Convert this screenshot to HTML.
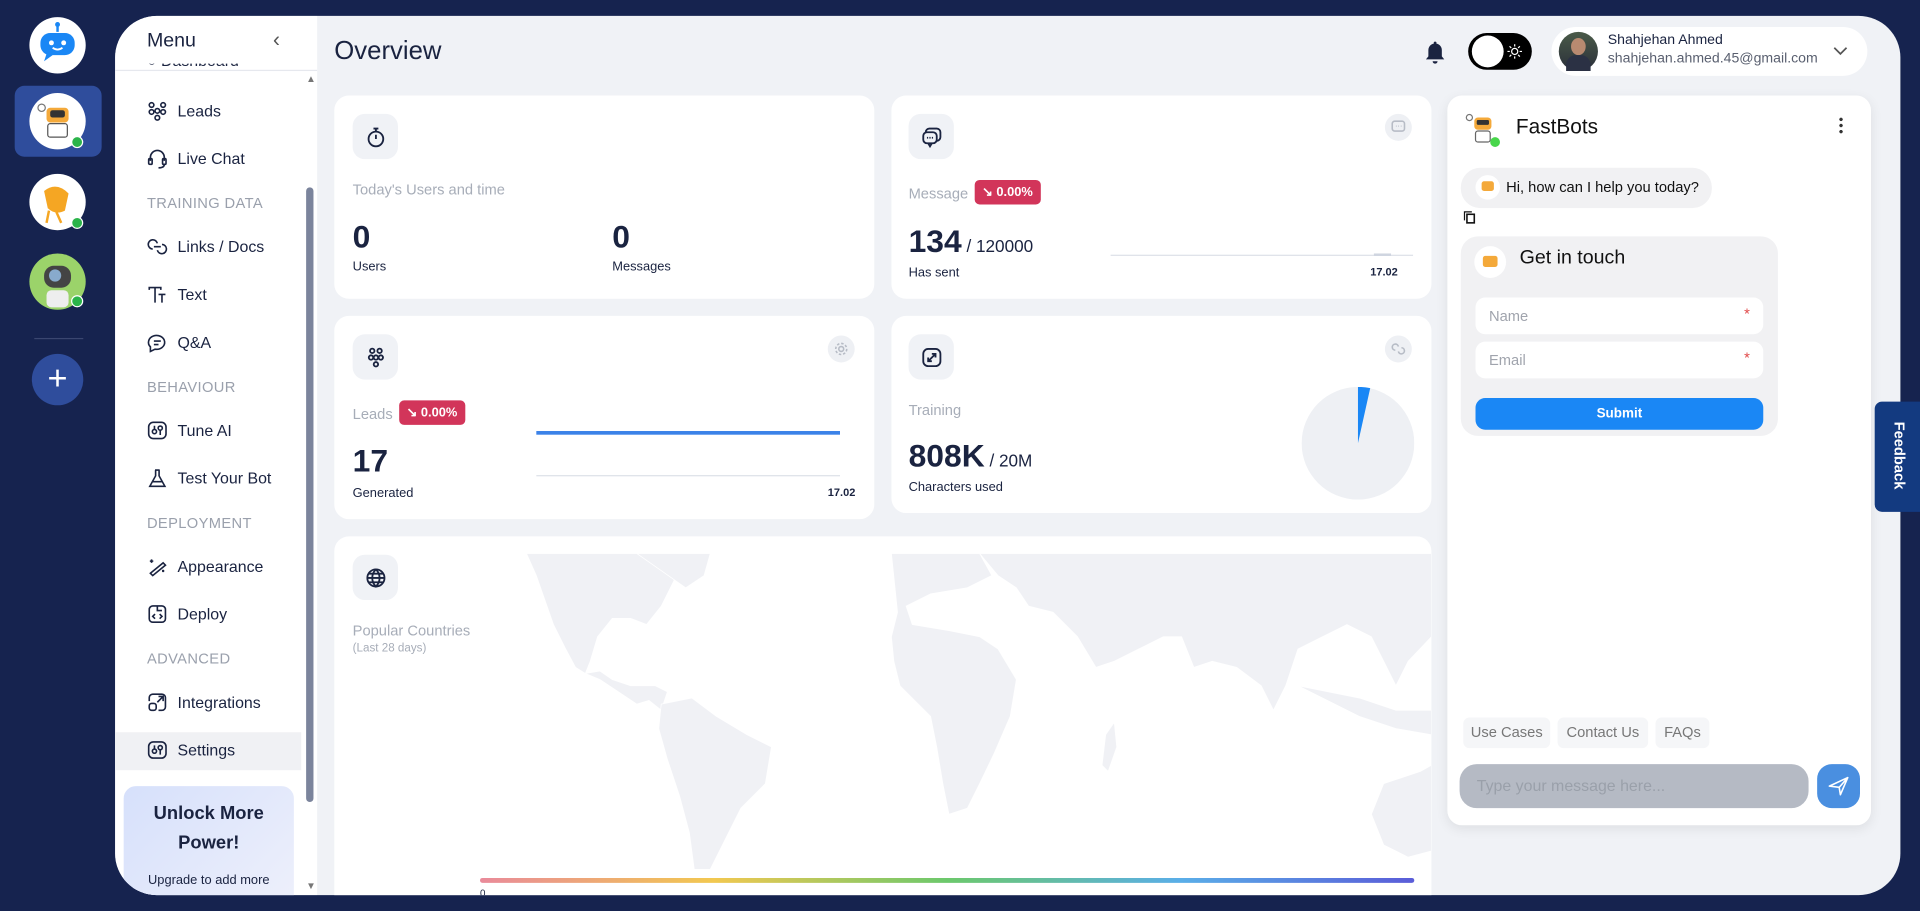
<!DOCTYPE html>
<html><head><meta charset="utf-8"><style>
*{box-sizing:border-box;margin:0;padding:0}
html,body{width:1920px;height:911px;overflow:hidden;background:#16234f;font-family:"Liberation Sans",sans-serif;color:#1a2340}
#s{position:absolute;left:0;top:0;width:1568px;height:744px;transform:scale(1.22449);transform-origin:0 0}
.a{position:absolute}
.av{position:absolute;width:46px;height:46px;border-radius:50%;background:#fff;overflow:hidden}
.dot{position:absolute;width:10px;height:10px;border-radius:50%;background:#2bb44a;border:1.5px solid #fff}
.mi{position:absolute;left:120px;font-size:13px;display:flex;align-items:center;gap:8px;color:#1a2340}
.mi svg{width:17px;height:17px;fill:none;stroke:#1a2340;stroke-width:1.4}
.sec{position:absolute;left:120px;font-size:12px;color:#9aa0ac;letter-spacing:.3px}
.card{position:absolute;background:#fff;border-radius:12px}
.ib{position:absolute;width:37px;height:37px;border-radius:10px;background:#f0f2f6;display:flex;align-items:center;justify-content:center}
.ib svg{width:18px;height:18px;fill:none;stroke:#1a2340;stroke-width:1.5}
.sc{position:absolute;width:22px;height:22px;border-radius:50%;background:#eef0f4;display:flex;align-items:center;justify-content:center}
.sc svg{width:12px;height:12px;fill:none;stroke:#b7bcc6;stroke-width:1.3}
.lbl{position:absolute;font-size:12px;color:#a7adb8}
.big{position:absolute;font-size:26px;font-weight:bold;color:#1a2340}
.sm{position:absolute;font-size:10.5px;color:#1a2340}
.badge{position:absolute;background:#d2355a;color:#fff;font-size:10.5px;font-weight:bold;border-radius:4px;height:20px;line-height:20px;padding:0 6px}
.chip{position:absolute;top:586px;height:25px;line-height:25px;background:#f5f6f8;border-radius:5px;font-size:12px;color:#777;text-align:center}
</style></head><body><div id="s">

<!-- rail -->
<div class="av" style="left:24px;top:14px"><svg width="46" height="46" viewBox="0 0 46 46"><line x1="23" y1="7" x2="23" y2="12" stroke="#1a87f5" stroke-width="2"/><circle cx="23" cy="6" r="2" fill="#1a87f5"/><rect x="9" y="13" width="28" height="18" rx="8" fill="#1a87f5"/><path d="M14 30 l-2 6 l7-5z" fill="#1a87f5"/><circle cx="18" cy="21" r="2" fill="#fff"/><circle cx="28" cy="21" r="2" fill="#fff"/><path d="M19 25 q4 3 8 0" stroke="#fff" stroke-width="1.5" fill="none"/></svg></div>
<div class="a" style="left:12px;top:70px;width:71px;height:58px;border-radius:8px;background:#2f4d9c"></div>
<div class="av" style="left:24px;top:76px"><svg width="46" height="46" viewBox="0 0 46 46"><rect x="14" y="12" width="18" height="12" rx="3" fill="#f4a93a"/><rect x="17" y="14" width="12" height="6" rx="2" fill="#333"/><rect x="15" y="25" width="16" height="11" rx="2" fill="#fff" stroke="#555"/><circle cx="10" cy="12" r="3" fill="none" stroke="#777"/></svg></div>
<div class="dot" style="left:58px;top:111px"></div>
<div class="av" style="left:24px;top:142px"><svg width="46" height="46" viewBox="0 0 46 46"><path d="M12 14 q10-8 20 2 l-3 14 q-8 4-14-2z" fill="#f5a623"/><path d="M16 30 l-2 10 M22 31 l4 9" stroke="#f5a623" stroke-width="2"/></svg></div>
<div class="dot" style="left:58px;top:177px"></div>
<div class="av" style="left:24px;top:207px;background:#9bd36a"><svg width="46" height="46" viewBox="0 0 46 46"><rect x="12" y="10" width="22" height="18" rx="8" fill="#444"/><circle cx="21" cy="18" r="5" fill="#8ac"/><rect x="14" y="30" width="18" height="14" rx="4" fill="#eee"/></svg></div>
<div class="dot" style="left:58px;top:241px"></div>
<div class="a" style="left:28px;top:276px;width:40px;height:1px;background:#3a4670"></div>
<div class="a" style="left:26px;top:289px;width:42px;height:42px;border-radius:50%;background:#2f4d9c;color:#fff;font-size:28px;line-height:40px;text-align:center">+</div>

<!-- main panel -->
<div class="a" style="left:94px;top:13px;width:1458px;height:718px;border-radius:34px;background:#f0f2f6;overflow:hidden">
 <div class="a" style="left:0;top:0;width:165px;height:718px;background:#fff"></div>
</div>

<!-- sidebar -->
<div class="a" style="left:94px;top:13px;width:165px;height:718px;border-radius:34px 0 0 34px;overflow:hidden">
 <div class="a" style="left:26px;top:12px;font-size:16px">Menu</div>
 <div class="a" style="left:129px;top:10px;font-size:17px;color:#555">&lsaquo;</div>
 <div class="a" style="left:26px;top:39px;width:80px;height:5px;overflow:hidden"><div style="margin-top:-10px;font-size:13px">&#9675; Dashboard y</div></div>
 <div class="a" style="left:0;top:44px;width:165px;height:1px;background:#e6e8ee"></div>
 <div class="a" style="left:156px;top:47px;font-size:8px;color:#777">&#9650;</div>
 <div class="a" style="left:156px;top:706px;font-size:8px;color:#777">&#9660;</div>
 <div class="a" style="left:156px;top:140px;width:6px;height:502px;border-radius:3px;background:#7b849c"></div>
 <div class="a" style="left:0;top:585px;width:152px;height:31px;background:#f0f1f4"></div>
 <div class="a" style="left:7px;top:629px;width:139px;height:100px;border-radius:10px;background:linear-gradient(135deg,#d6e0fb,#eef0fb);text-align:center">
  <div style="font-size:15px;font-weight:bold;line-height:24px;margin-top:11px;color:#1a2340">Unlock More<br>Power!</div>
  <div style="font-size:10.5px;margin-top:12px">Upgrade to add more</div>
 </div>
</div>
<div class="mi" style="top:82px"><svg viewBox="0 0 18 18"><circle cx="4" cy="4" r="2"/><circle cx="14" cy="4" r="2"/><circle cx="9" cy="9" r="2"/><circle cx="4" cy="10" r="2"/><circle cx="14" cy="10" r="2"/><circle cx="9" cy="15" r="2"/></svg>Leads</div>
<div class="mi" style="top:121px"><svg viewBox="0 0 18 18"><path d="M3 11 V8 a6 6 0 0 1 12 0 v3"/><rect x="1.5" y="9" width="3" height="5" rx="1"/><rect x="13.5" y="9" width="3" height="5" rx="1"/><path d="M15 14 q0 3-5 3"/></svg>Live Chat</div>
<div class="sec" style="top:159px">TRAINING DATA</div>
<div class="mi" style="top:193px"><svg viewBox="0 0 18 18"><path d="M9 6 a4 4 0 1 0-4 5 M9 12 a4 4 0 1 0 4-5 M6 9 h6"/></svg>Links / Docs</div>
<div class="mi" style="top:232px"><svg viewBox="0 0 18 18"><path d="M2 5 V3 h10 v2 M7 3 v13 M10 9 h6 M13 9 v7"/></svg>Text</div>
<div class="mi" style="top:271px"><svg viewBox="0 0 18 18"><path d="M3 13 a7 6 0 1 1 4 2 l-4 2z M6 8 h6 M6 11 h4"/></svg>Q&amp;A</div>
<div class="sec" style="top:309px">BEHAVIOUR</div>
<div class="mi" style="top:343px"><svg viewBox="0 0 18 18"><rect x="1.5" y="2" width="15" height="14" rx="4"/><circle cx="6.5" cy="10" r="1.8"/><circle cx="11.5" cy="7" r="1.8"/><path d="M6.5 5 v3 M11.5 9 v4"/></svg>Tune AI</div>
<div class="mi" style="top:382px"><svg viewBox="0 0 18 18"><path d="M7 2 h4 M7.5 2 v5 l-5 9 h13 l-5-9 V2 M5 12 h8"/></svg>Test Your Bot</div>
<div class="sec" style="top:420px">DEPLOYMENT</div>
<div class="mi" style="top:454px"><svg viewBox="0 0 18 18"><path d="M3 15 L14 6 l2 2 L5 17z M4 3 v3 M2.5 4.5 h3 M14 12 v2 M13 13 h2"/></svg>Appearance</div>
<div class="mi" style="top:493px"><svg viewBox="0 0 18 18"><rect x="2" y="2" width="14" height="14" rx="3"/><path d="M7 9 l-2 2 2 2 M11 9 l2 2-2 2 M9 2 v4 h4"/></svg>Deploy</div>
<div class="sec" style="top:531px">ADVANCED</div>
<div class="mi" style="top:565px"><svg viewBox="0 0 18 18"><rect x="2" y="10" width="6" height="6" rx="2"/><path d="M2 8 V5 a3 3 0 0 1 3-3 h8 a3 3 0 0 1 3 3 v8 a3 3 0 0 1-3 3 h-3 M9 9 l5-5 M10 4 h4 v4"/></svg>Integrations</div>
<div class="mi" style="top:604px"><svg viewBox="0 0 18 18"><rect x="1.5" y="2" width="15" height="14" rx="4"/><circle cx="6.5" cy="10" r="1.8"/><circle cx="11.5" cy="7" r="1.8"/><path d="M6.5 5 v3 M11.5 9 v4"/></svg>Settings</div>

<!-- header -->
<div class="a" style="left:273px;top:30px;font-size:21px">Overview</div>
<svg class="a" style="left:1163px;top:33px" width="18" height="20" viewBox="0 0 18 20"><path d="M9 1 a1 1 0 0 1 1 1.5 a5.5 5.5 0 0 1 4.5 5.5 v5 l2 2.5 H1.5 l2-2.5 v-5 A5.5 5.5 0 0 1 8 2.5 A1 1 0 0 1 9 1z" fill="#1a2340"/><path d="M7 17 h4 a2 2 0 0 1-4 0z" fill="#1a2340"/></svg>
<div class="a" style="left:1199px;top:27px;width:52px;height:30px;border-radius:15px;background:#000"><div class="a" style="left:3px;top:2px;width:26px;height:26px;border-radius:50%;background:#fff"></div><svg class="a" style="left:32px;top:9px" width="12" height="12" viewBox="0 0 12 12"><circle cx="6" cy="6" r="2.5" fill="none" stroke="#fff"/><path d="M6 0v2M6 10v2M0 6h2M10 6h2M1.8 1.8l1.4 1.4M8.8 8.8l1.4 1.4M1.8 10.2l1.4-1.4M8.8 3.2l1.4-1.4" stroke="#fff"/></svg></div>
<div class="a" style="left:1267px;top:22px;width:258px;height:40px;border-radius:20px;background:#fff">
 <div class="a" style="left:6px;top:4px;width:32px;height:32px;border-radius:50%;background:linear-gradient(#4a5a48,#2a2f3a)"><div class="a" style="left:10px;top:5px;width:12px;height:14px;border-radius:50%;background:#b88a70"></div><div class="a" style="left:6px;top:19px;width:20px;height:13px;border-radius:8px 8px 0 0;background:#2b3144"></div></div>
 <div class="a" style="left:46px;top:5px;font-size:11.5px;color:#1a2340">Shahjehan Ahmed</div>
 <div class="a" style="left:46px;top:20px;font-size:11.5px;color:#5a6070">shahjehan.ahmed.45@gmail.com</div>
 <svg class="a" style="left:230px;top:16px" width="12" height="8" viewBox="0 0 12 8"><path d="M1 1 l5 5 5-5" fill="none" stroke="#555" stroke-width="1.4"/></svg>
</div>

<!-- card 1 -->
<div class="card" style="left:273px;top:78px;width:441px;height:166px">
 <div class="ib" style="left:15px;top:15px"><svg viewBox="0 0 18 18"><circle cx="9" cy="10.5" r="6"/><path d="M9 10.5 V7 M7 2 h4 M9 2 v2.5"/></svg></div>
 <div class="lbl" style="left:15px;top:70px">Today's Users and time</div>
 <div class="big" style="left:15px;top:100px">0</div><div class="sm" style="left:15px;top:134px">Users</div>
 <div class="big" style="left:227px;top:100px">0</div><div class="sm" style="left:227px;top:134px">Messages</div>
</div>
<!-- card 2 -->
<div class="card" style="left:728px;top:78px;width:441px;height:166px">
 <div class="ib" style="left:14px;top:15px"><svg viewBox="0 0 18 18"><path d="M4 5 a3 3 0 0 1 3-3 h6 a3 3 0 0 1 3 3 v4 a3 3 0 0 1-3 3"/><rect x="2" y="5" width="11" height="9" rx="3"/><path d="M6 14 l1.5 2.5 1.5-2.5 M5 9.5h1M7 9.5h1M9 9.5h1"/></svg></div>
 <div class="sc" style="left:403px;top:15px"><svg viewBox="0 0 12 12"><rect x="1" y="1" width="10" height="8" rx="2"/><path d="M4 5h.5M6 5h.5M8 5h.5"/></svg></div>
 <div class="lbl" style="left:14px;top:73px">Message</div>
 <div class="badge" style="left:68px;top:69px">&#8600; 0.00%</div>
 <div class="big" style="left:14px;top:104px">134<span style="font-size:14px;font-weight:normal"> / 120000</span></div>
 <div class="sm" style="left:14px;top:139px">Has sent</div>
 <div class="a" style="left:179px;top:130px;width:247px;height:1px;background:#dde1e8"></div>
 <div class="a" style="left:394px;top:129px;width:14px;height:2px;background:#cfd5e0"></div>
 <div class="a" style="left:391px;top:139px;font-size:9px;font-weight:bold">17.02</div>
</div>
<!-- card 3 -->
<div class="card" style="left:273px;top:258px;width:441px;height:166px">
 <div class="ib" style="left:15px;top:15px"><svg viewBox="0 0 18 18"><circle cx="6" cy="3.5" r="1.8"/><circle cx="12" cy="3.5" r="1.8"/><circle cx="9" cy="9" r="1.8"/><circle cx="5" cy="9" r="1.8"/><circle cx="13" cy="9" r="1.8"/><circle cx="9" cy="14.5" r="1.8"/></svg></div>
 <div class="sc" style="left:403px;top:16px"><svg viewBox="0 0 12 12"><circle cx="6" cy="6" r="2"/><circle cx="6" cy="6" r="4.5" stroke-dasharray="2 1.5"/></svg></div>
 <div class="lbl" style="left:15px;top:73px">Leads</div>
 <div class="badge" style="left:53px;top:69px">&#8600; 0.00%</div>
 <div class="big" style="left:15px;top:103px">17</div>
 <div class="sm" style="left:15px;top:139px">Generated</div>
 <div class="a" style="left:165px;top:94px;width:248px;height:2.5px;background:#3b82e8"></div>
 <div class="a" style="left:165px;top:130px;width:248px;height:1px;background:#dde1e8"></div>
 <div class="a" style="left:403px;top:139px;font-size:9px;font-weight:bold">17.02</div>
</div>
<!-- card 4 -->
<div class="card" style="left:728px;top:258px;width:441px;height:161px">
 <div class="ib" style="left:14px;top:15px"><svg viewBox="0 0 18 18"><rect x="2" y="2" width="14" height="14" rx="4"/><path d="M6 12 l6-6 M6 9 v3 h3 M12 9 V6 H9"/></svg></div>
 <div class="sc" style="left:403px;top:16px"><svg viewBox="0 0 12 12"><path d="M6 4 a2.5 2.5 0 1 0-2.5 3 M6 8 a2.5 2.5 0 1 0 2.5-3"/></svg></div>
 <div class="lbl" style="left:14px;top:70px">Training</div>
 <div class="big" style="left:14px;top:99px">808K<span style="font-size:14px;font-weight:normal"> / 20M</span></div>
 <div class="sm" style="left:14px;top:134px">Characters used</div>
 <svg class="a" style="left:335px;top:58px" width="92" height="92" viewBox="0 0 92 92"><circle cx="46" cy="46" r="46" fill="#eef0f4"/><path d="M46 46 L46 0 A46 46 0 0 1 56 1z" fill="#1a87f5"/></svg>
</div>
<!-- map card -->
<div class="a" style="left:94px;top:13px;width:1458px;height:718px;border-radius:34px;overflow:hidden;pointer-events:none">
<div class="card" style="left:179px;top:425px;width:896px;height:320px">
 <div class="ib" style="left:15px;top:15px"><svg viewBox="0 0 18 18"><circle cx="9" cy="9" r="7"/><path d="M2 9h14 M9 2 c-4 4-4 10 0 14 c4-4 4-10 0-14 M3 5.5h12 M3 12.5h12"/></svg></div>
 <div class="lbl" style="left:15px;top:70px">Popular Countries</div>
 <div class="a" style="left:15px;top:86px;font-size:9.5px;color:#a7adb8">(Last 28 days)</div>
 <svg class="a" style="left:0;top:0" width="896" height="320" viewBox="273 438 896 320">
  <g fill="#f0f1f5" stroke="#fff" stroke-width=".6">
   <path d="M430 452 L560 452 L550 475 L540 495 L528 510 L515 505 L500 505 L488 520 L482 540 L478 550 L470 545 L462 530 L452 510 L445 490 L438 470z"/>
   <path d="M478 550 L490 555 L505 565 L520 575 L530 572 L540 580 L545 565 L535 560 L515 560 L500 555 L490 548z"/>
   <path d="M540 575 L565 570 L585 585 L610 600 L630 610 L625 640 L605 660 L590 690 L580 710 L567 710 L563 680 L555 650 L545 620 L538 595z"/>
   <path d="M520 452 L580 452 L575 470 L560 480z"/>
   <path d="M728 452 L800 452 L810 470 L790 480 L760 485 L740 495 L745 510 L775 515 L800 520 L815 530 L830 555 L825 585 L812 615 L800 640 L790 660 L775 665 L770 640 L765 610 L760 585 L745 570 L735 560 L730 540 L728 520 L733 500z"/>
   <path d="M800 452 L1169 452 L1169 520 L1150 540 L1140 560 L1130 540 L1120 520 L1100 510 L1080 520 L1060 530 L1050 560 L1040 580 L1030 560 L1010 545 L990 540 L975 545 L965 520 L950 520 L930 530 L910 540 L895 545 L880 520 L870 510 L860 500 L840 495 L830 480 L815 470z"/>
   <path d="M1060 560 L1090 575 L1110 585 L1140 595 L1169 600 L1169 580 L1140 580 L1110 570z"/>
   <path d="M1130 640 L1160 630 L1169 625 L1169 695 L1150 700 L1130 690 L1120 665z"/>
   <path d="M903 600 L910 590 L912 610 L905 630 L900 625z"/>
  </g>
 </svg>
 <div class="a" style="left:119px;top:279px;width:763px;height:4px;border-radius:2px;background:linear-gradient(90deg,#e98a9a,#f2c850 25%,#6cc86c 50%,#5aaee8 75%,#5a5cd8)"></div>
 <div class="a" style="left:119px;top:287px;font-size:8px">0</div>
</div>
</div>

<!-- chat panel -->
<div class="a" style="left:1182px;top:78px;width:346px;height:596px;background:#fff;border-radius:12px;box-shadow:0 3px 10px rgba(0,0,0,.08)">
 <svg class="a" style="left:14px;top:12px" width="30" height="32" viewBox="0 0 30 32"><circle cx="4" cy="6" r="2.5" fill="none" stroke="#777"/><rect x="8" y="6" width="14" height="10" rx="3" fill="#f4a93a"/><rect x="10" y="8" width="10" height="4" rx="1" fill="#333"/><rect x="9" y="17" width="12" height="9" rx="2" fill="#fff" stroke="#666"/><circle cx="25" cy="26" r="4" fill="#47d64a"/></svg>
 <div class="a" style="left:56px;top:16px;font-size:17px;color:#111">FastBots</div>
 <div class="a" style="left:320px;top:17px;width:3px;height:14px;background:radial-gradient(circle,#333 1.3px,transparent 1.5px) 0 0/3px 5px"></div>
 <div class="a" style="left:11px;top:59px;width:205px;height:33px;border-radius:16px;background:#f1f1f3">
  <div class="a" style="left:12px;top:6px;width:20px;height:20px;border-radius:50%;background:#fff"><div class="a" style="left:5px;top:5px;width:10px;height:8px;background:#f4a93a;border-radius:2px"></div></div>
  <div class="a" style="left:37px;top:9px;font-size:12px;color:#111">Hi, how can I help you today?</div>
 </div>
 <svg class="a" style="left:13px;top:94px" width="10" height="11" viewBox="0 0 10 11"><rect x="3" y="3" width="6" height="7" fill="none" stroke="#111" stroke-width="1.3"/><path d="M1 8 V1 h6" fill="none" stroke="#111"/></svg>
 <div class="a" style="left:11px;top:115px;width:259px;height:163px;border-radius:14px;background:#f1f1f3">
  <div class="a" style="left:11px;top:8px;width:26px;height:26px;border-radius:50%;background:#fff"><div class="a" style="left:7px;top:8px;width:12px;height:9px;background:#f4a93a;border-radius:2px"></div></div>
  <div class="a" style="left:48px;top:9px;font-size:16px;color:#111">Get in touch</div>
  <div class="a" style="left:12px;top:50px;width:235px;height:30px;border-radius:8px;background:#fff;font-size:12px;color:#a0a4ad;padding:8px 11px">Name<span style="position:absolute;right:11px;top:6px;color:#e04848">*</span></div>
  <div class="a" style="left:12px;top:86px;width:235px;height:30px;border-radius:8px;background:#fff;font-size:12px;color:#a0a4ad;padding:8px 11px">Email<span style="position:absolute;right:11px;top:6px;color:#e04848">*</span></div>
  <div class="a" style="left:12px;top:132px;width:235px;height:26px;border-radius:8px;background:#1a87f5;color:#fff;font-size:11px;font-weight:bold;text-align:center;line-height:26px">Submit</div>
 </div>
 <div class="chip" style="left:13px;top:508px;width:71px">Use Cases</div>
 <div class="chip" style="left:90px;top:508px;width:74px">Contact Us</div>
 <div class="chip" style="left:170px;top:508px;width:44px">FAQs</div>
 <div class="a" style="left:10px;top:546px;width:285px;height:36px;border-radius:14px;background:#b5bac4;font-size:13px;color:#9aa0aa;padding:10px 14px">Type your message here...</div>
 <div class="a" style="left:302px;top:546px;width:35px;height:36px;border-radius:12px;background:#4a8fe0"><svg class="a" style="left:9px;top:10px" width="17" height="16" viewBox="0 0 17 16"><path d="M16 1 L1 8 L9 9 L10 15z M16 1 L9 9" fill="none" stroke="#fff" stroke-width="1.3" stroke-linejoin="round"/></svg></div>
</div>

<!-- feedback -->
<div class="a" style="left:1531px;top:328px;width:40px;height:90px;border-radius:6px 0 0 6px;background:#133a80"><div class="a" style="left:-25px;top:37px;width:90px;text-align:center;transform:rotate(90deg);color:#fff;font-size:12px;font-weight:bold">Feedback</div></div>

</div></body></html>
